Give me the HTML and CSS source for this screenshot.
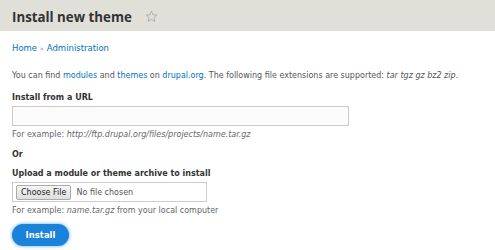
FILE: index.html
```html
<!DOCTYPE html>
<html>
<head>
<meta charset="utf-8">
<link rel="stylesheet" href="styles.css">
</head>
<body>
<header class="page-header">
  <h1 class="page-title">Install new theme</h1>
  <svg class="star" width="13" height="13" viewBox="0 0 24 24"><path d="M12 2.5l2.9 6.3 6.9.7-5.2 4.6 1.5 6.8L12 17.4l-6.1 3.5 1.5-6.8-5.2-4.6 6.9-.7z" fill="none" stroke="#a8a8a2" stroke-width="1.6" stroke-linejoin="round"/></svg>
</header>
<main class="content">
  <nav class="breadcrumb"><a href="#">Home</a> <span class="sep">»</span> <a href="#">Administration</a></nav>
  <p class="intro">You can find <a href="#">modules</a> and <a href="#">themes</a> on <a href="#">drupal.org</a>. The following file extensions are supported: <em>tar tgz gz bz2 zip</em>.</p>
  <div class="field">
    <label class="label">Install from a URL</label>
    <div class="text-input"></div>
    <div class="desc">For example: <em>http://ftp.drupal.org/files/projects/name.tar.gz</em></div>
  </div>
  <div class="or">Or</div>
  <div class="field field-upload">
    <label class="label">Upload a module or theme archive to install</label>
    <div class="file-input"><span class="choose">Choose File</span><span class="nofile">No file chosen</span></div>
    <div class="desc">For example: <em>name.tar.gz</em> from your local computer</div>
  </div>
  <button class="install">Install</button>
</main>
</body>
</html>
```
FILE: styles.css
```css
html, body { margin: 0; padding: 0; background: #fff; }
body { font-family: "DejaVu Sans", Verdana, sans-serif; color: #333; width: 495px; height: 250px; overflow: hidden; }
a { color: #0074bd; text-decoration: none; }
.page-header { background: #e0e0d8; height: 31px; display: flex; align-items: center; padding-left: 12px; gap: 13px; }
.page-title { margin: 0; font-family: "Open Sans", "DejaVu Sans", sans-serif; font-size: 13.3px; font-weight: bold; color: #333; padding-top: 2px; line-height: 20px; }
.star { margin-top: 2px; }
.content { padding: 0 12px; font-size: 8px; }
.breadcrumb { margin-top: 11px; line-height: 12px; font-size: 8.5px; }
.breadcrumb .sep { color: #999; font-size: 7px; }
.intro { margin: 15px 0 0; line-height: 12px; color: #555; }
.intro em { color: #555; }
.field { margin-top: 10px; }
.label { display: block; font-weight: bold; color: #333; line-height: 12px; }
.text-input { margin-top: 2px; width: 335px; height: 18px; border: 1px solid #ccc; background: #fcfcfc; }
.desc { margin-top: 3px; font-size: 8px; color: #666; line-height: 12px; }
.or { margin-top: 8px; font-weight: bold; line-height: 12px; }
.field-upload { margin-top: 7px; }
.file-input { margin-top: 2px; width: 190px; height: 18px; border: 1px solid #ccc; display: flex; align-items: center; padding-left: 3px; gap: 5px; }
.choose { border: 1px solid #aaa; background: linear-gradient(#f6f6f6, #dedede); border-radius: 2px; padding: 1px 4px; color: #222; font-size: 8px; line-height: 11px; }
.nofile { color: #555; font-size: 8px; }
.install { display: block; margin-top: 7px; width: 57px; height: 22px; border: none; border-radius: 12px; background: #1a82d8; color: #fff; font-family: inherit; font-weight: bold; font-size: 8.5px; box-shadow: 0 0 3px 1px #9ccaf2; padding: 0; }
```
